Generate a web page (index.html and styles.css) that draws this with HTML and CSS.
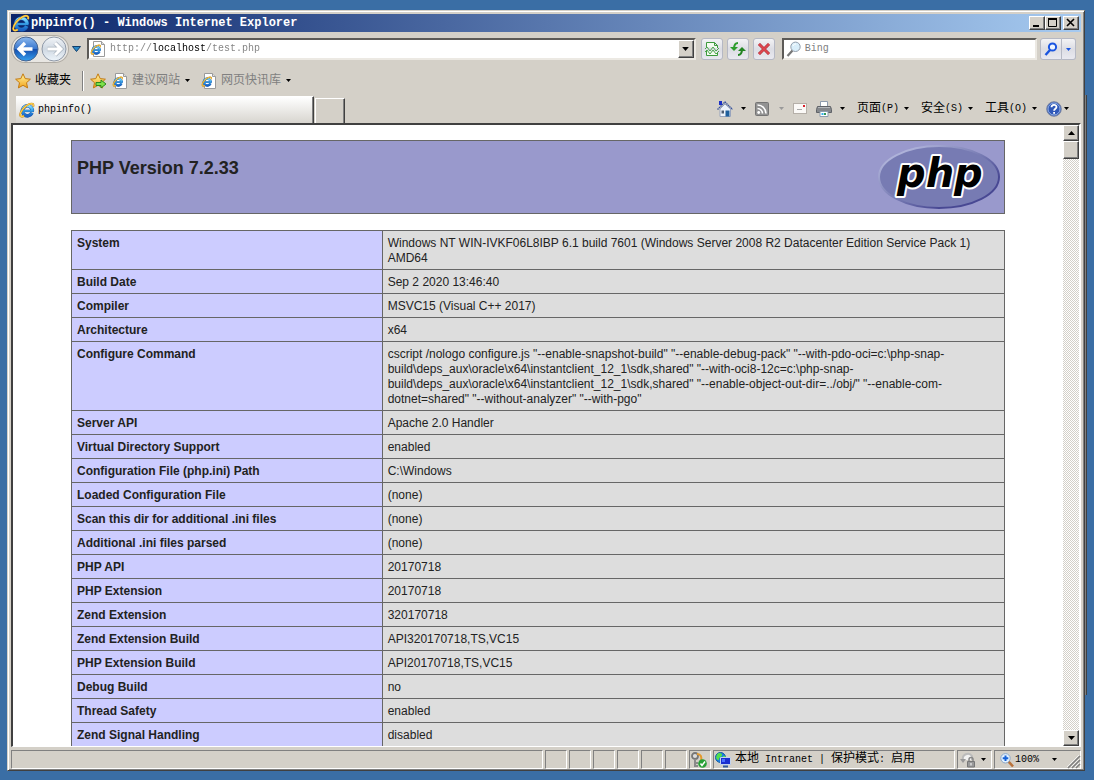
FILE: index.html
```html
<!DOCTYPE html>
<html lang="zh-CN">
<head>
<meta charset="utf-8">
<title>phpinfo()</title>
<link rel="stylesheet" href="styles.css">
</head>
<body>
<svg class="defs" aria-hidden="true">
  <defs>
    <linearGradient id="blue" x1="0" y1="0" x2="0" y2="1"><stop offset="0" stop-color="#86dcfc"/><stop offset=".5" stop-color="#2f9fe8"/><stop offset="1" stop-color="#1b62c4"/></linearGradient>
    <linearGradient id="gold" x1="0" y1="0" x2="0" y2="1"><stop offset="0" stop-color="#fff3a0"/><stop offset="1" stop-color="#f2a51c"/></linearGradient>
    <linearGradient id="backfill" x1="0" y1="0" x2="0" y2="1"><stop offset="0" stop-color="#8db9ee"/><stop offset=".48" stop-color="#3a78cf"/><stop offset=".52" stop-color="#164fae"/><stop offset="1" stop-color="#35a0f0"/></linearGradient>
    <linearGradient id="fwdfill" x1="0" y1="0" x2="0" y2="1"><stop offset="0" stop-color="#f2f5f8"/><stop offset=".5" stop-color="#cfd8e2"/><stop offset="1" stop-color="#eef5fb"/></linearGradient>
    <linearGradient id="rim" x1="0" y1="0" x2="1" y2="1"><stop offset=".15" stop-color="#aeb2d9"/><stop offset=".5" stop-color="#777bb3"/><stop offset=".75" stop-color="#484893"/></linearGradient>
    <symbol id="ie" viewBox="0 0 16 16">
      <path d="M13 10.800A5 5 0 1 1 13.400 8.800" fill="none" stroke="#1a5cae" stroke-width="3.600"/>
      <path d="M4.500 8.900h10.400" stroke="#1a5cae" stroke-width="2.400"/>
      <path d="M13 10.800A5 5 0 1 1 13.400 8.800" fill="none" stroke="url(#blue)" stroke-width="2.600"/>
      <path d="M4.500 8.900h9.900" stroke="#39a3ea" stroke-width="1.500"/>
      <path d="M14.200 4.600C15.200 2 13.300.6 9.700 2.300 5.300 4.400 1.300 9.600 1.100 12.900c-.1 2 1.800 2.200 4 1" fill="none" stroke="#b87812" stroke-width="1.800"/>
      <path d="M14.200 4.600C15.200 2 13.300.6 9.700 2.300 5.300 4.400 1.300 9.600 1.100 12.900c-.1 2 1.800 2.200 4 1" fill="none" stroke="#ffd24a" stroke-width="1.200"/>
    </symbol>
    <symbol id="iepage" viewBox="0 0 16 16">
      <path d="M3.500.5h8l3 3v12h-11z" fill="#fff" stroke="#9a9a9a"/><path d="M11.500.5v3h3" fill="#ddd" stroke="#9a9a9a"/>
      <use href="#ie" x="0" y="3" width="12" height="11"/>
    </symbol>
    <symbol id="star" viewBox="0 0 16 16">
      <path d="M8 .8l2.200 4.800 5.200.6-3.900 3.500 1.100 5.200L8 12.300l-4.600 2.600 1.100-5.200L.6 6.200l5.200-.6z" fill="url(#gold)" stroke="#c47a10"/>
    </symbol>
    <symbol id="down" viewBox="0 0 5 3"><path d="M0 0h5L2.500 3z" fill="currentColor"/></symbol>
  </defs>
</svg>

<div class="behind"></div>
<main class="window">
  <header class="titlebar">
    <svg class="icon18"><use href="#ie"/></svg>
    <h1 class="caption">phpinfo() - Windows Internet Explorer</h1>
    <div class="winbtns">
      <button class="bevel winbtn" aria-label="最小化"><svg width="12" height="10" viewBox="0 0 12 10"><path d="M2 8h6" stroke="#000" stroke-width="2"/></svg></button>
      <button class="bevel winbtn" aria-label="最大化"><svg width="12" height="10" viewBox="0 0 12 10"><path d="M1.500 1v7.500h8V1M1 1h9" fill="none" stroke="#000"/><path d="M1 1h9" stroke="#000" stroke-width="2"/></svg></button>
      <button class="bevel winbtn close" aria-label="关闭"><svg width="12" height="10" viewBox="0 0 12 10"><path d="M2 1l7 7M9 1L2 8" stroke="#000" stroke-width="1.600"/></svg></button>
    </div>
  </header>

  <nav class="navbar">
    <div class="travel">
      <button class="plain" aria-label="后退"><svg width="26" height="26" viewBox="0 0 26 26"><circle cx="13" cy="13" r="12" fill="url(#backfill)" stroke="#47648f"/><path d="M19.500 13H7M12 7l-6 6 6 6" fill="none" stroke="#fff" stroke-width="3.400"/></svg></button>
      <button class="plain" aria-label="前进"><svg width="26" height="26" viewBox="0 0 26 26"><circle cx="13" cy="13" r="12" fill="url(#fwdfill)" stroke="#8f99a8"/><path d="M6.500 13H19M14 7l6 6-6 6" fill="none" stroke="#a8b2bd" stroke-width="4.400"/><path d="M6.500 13H19M14 7l6 6-6 6" fill="none" stroke="#fff" stroke-width="3"/></svg></button>
    </div>
    <button class="plain history" aria-label="最近的页面"><svg width="9" height="6" viewBox="0 0 9 6"><path d="M.5.5h8l-4 5z" fill="#2b8ac8" stroke="#123f6c"/></svg></button>
    <div class="field address">
      <svg class="icon16"><use href="#iepage"/></svg>
      <input class="url" type="text" aria-label="地址" value="http://localhost/test.php">
      <button class="bevel drop" aria-label="显示地址列表"><svg width="7" height="4"><use href="#down"/></svg></button>
    </div>
    <button class="tool" aria-label="兼容性视图"><svg width="16" height="16" viewBox="0 0 16 16"><path d="M2.500 6V1.500h8l3 3V7M10.500 1.500v3h3M2.500 10v4.500h11V11" fill="#f3fbf0" stroke="#3d9a3d"/><path d="M1 8l2-2 3 4 3-4 3 4 3-3M1 11l2-2 3 4 3-4 3 4 3-3" fill="none" stroke="#4aa84a"/></svg></button>
    <button class="tool" aria-label="刷新"><svg width="16" height="16" viewBox="0 0 16 16"><path d="M8 2C5 2 4 4 4 8" fill="none" stroke="#2d9d2d" stroke-width="2"/><path d="M0 6h8L4 10z" fill="#2d9d2d"/><path d="M8 14c3 0 4-2 4-6" fill="none" stroke="#238523" stroke-width="2"/><path d="M8 10h8l-4-4z" fill="#238523"/></svg></button>
    <button class="tool" aria-label="停止"><svg width="16" height="16" viewBox="0 0 16 16"><path d="M3 3l10 10M13 3L3 13" stroke="#a82c34" stroke-width="3"/><path d="M3 3l10 10M13 3L3 13" stroke="#df4650" stroke-width="1.800"/></svg></button>
    <div class="field search">
      <svg width="16" height="16" viewBox="0 0 16 16"><path d="M6.500 9.500L1.500 15" stroke="#777" stroke-width="2.200"/><circle cx="9.500" cy="5.800" r="4.700" fill="#d9eefa" stroke="#929daa"/><path d="M7 5c.5-1.500 1.500-2 3-2" stroke="#fff" fill="none"/></svg>
      <input class="query" type="text" placeholder="Bing" aria-label="搜索">
    </div>
    <div class="go">
      <button class="tool goicon" aria-label="搜索"><svg width="14" height="14" viewBox="0 0 14 14"><circle cx="8.500" cy="5" r="3.600" fill="#eef5ff" stroke="#1a55e0" stroke-width="2"/><path d="M6 8l-4.500 5" stroke="#1a55e0" stroke-width="2.400"/></svg></button>
      <button class="tool godrop" aria-label="搜索选项"><svg width="5" height="3"><use href="#down"/></svg></button>
    </div>
  </nav>

  <nav class="favbar">
    <button class="plain link strong"><svg class="icon16"><use href="#star"/></svg>收藏夹</button>
    <span class="rule"></span>
    <button class="plain" aria-label="添加到收藏夹栏"><svg width="16" height="16" viewBox="0 0 16 16"><use href="#star"/><path d="M6 9.500h5V7l5 4-5 4v-2.500H6z" fill="#7ee04a" stroke="#2a8a1d"/></svg></button>
    <button class="plain link"><svg class="icon16"><use href="#iepage"/></svg>建议网站<svg class="caret"><use href="#down"/></svg></button>
    <button class="plain link"><svg class="icon16"><use href="#iepage"/></svg>网页快讯库<svg class="caret"><use href="#down"/></svg></button>
  </nav>

  <div class="tabrow">
    <button class="tab"><svg class="icon16"><use href="#ie"/></svg><span class="latin">phpinfo()</span></button>
    <button class="newtab" aria-label="新选项卡"></button>
    <div class="commands">
      <button class="plain cmd" aria-label="主页"><svg width="16" height="16" viewBox="0 0 16 16"><path d="M3 8v7.500h10.500V8L8 3z" fill="#eef3fb" stroke="#98a4bd"/><path d="M.5 8.500L8 1l7.500 7.500" fill="none" stroke="#38539c" stroke-width="1.400" stroke-dasharray="1.500 .6"/><path d="M2 0h3v4H2z" fill="#1a2fc8"/><path d="M8.500 9.500h4v6h-4z" fill="#1f5f9c"/><path d="M4.500 9.500h2.500v3H4.500z" fill="#4c5c72"/></svg><svg class="caret"><use href="#down"/></svg></button>
      <button class="plain cmd dim" aria-label="源"><svg width="14" height="14" viewBox="0 0 14 14"><rect x=".5" y=".5" width="13" height="13" rx="1" fill="#929292" stroke="#747474"/><circle cx="3.700" cy="10.500" r="1.400" fill="#fff"/><path d="M2.500 6.500a5 5 0 0 1 5 5M2.500 3a8.500 8.500 0 0 1 8.500 8.500" fill="none" stroke="#fff" stroke-width="1.600"/></svg><svg class="caret"><use href="#down"/></svg></button>
      <button class="plain cmd" aria-label="阅读邮件"><svg width="14" height="11" viewBox="0 0 14 11"><rect x=".5" y=".5" width="13" height="10" fill="#fbf9f7" stroke="#b5afa8"/><path d="M10 2h2v2h-2z" fill="#d8202a"/><path d="M4 6.500h5" stroke="#aaa"/></svg></button>
      <button class="plain cmd" aria-label="打印"><svg width="16" height="16" viewBox="0 0 16 16"><path d="M4.500.5h7V6h-7z" fill="#fff" stroke="#8e9cae"/><path d="M1.500 5.500h13l1 3v3H.5v-3z" fill="#85888c" stroke="#606368"/><path d="M2 6.500h12" stroke="#b4b7bb"/><path d="M4 10.500h8v5H4z" fill="#fff" stroke="#8e9cae"/><path d="M5.500 13h2" stroke="#35aeea" stroke-width="2"/><path d="M8 13h2" stroke="#2f9a58" stroke-width="2"/></svg><svg class="caret"><use href="#down"/></svg></button>
      <button class="plain cmd menu">页面<span class="latin">(P)</span><svg class="caret"><use href="#down"/></svg></button>
      <button class="plain cmd menu">安全<span class="latin">(S)</span><svg class="caret"><use href="#down"/></svg></button>
      <button class="plain cmd menu">工具<span class="latin">(O)</span><svg class="caret"><use href="#down"/></svg></button>
      <button class="plain cmd help" aria-label="帮助"><svg width="16" height="16" viewBox="0 0 16 16"><circle cx="8" cy="8" r="7.300" fill="#2f58b8" stroke="#7c86a0"/><circle cx="8" cy="8" r="6" fill="none" stroke="#a9c4ef" stroke-width=".8"/><path d="M5.500 6.300c0-3.300 5-3.200 5-.3 0 1.800-2.400 1.700-2.400 3.700M8.100 11v1.800" fill="none" stroke="#fff" stroke-width="1.800"/></svg><svg class="caret"><use href="#down"/></svg></button>
    </div>
  </div>

  <section class="client">
    <div class="page">
      <div class="banner">
        <h2 class="version">PHP Version 7.2.33</h2>
        <svg class="logo" width="122" height="66" viewBox="0 0 122 66" role="img" aria-label="PHP logo">
          <ellipse cx="61" cy="32" rx="60" ry="31" fill="#777bb3" stroke="url(#rim)" stroke-width="2"/>
          <text class="wordmark" x="19" y="42">php</text>
        </svg>
      </div>
      <table class="info">
        <tbody>
          <tr><th scope="row">System</th><td>Windows NT WIN-IVKF06L8IBP 6.1 build 7601 (Windows Server 2008 R2 Datacenter Edition Service Pack 1) AMD64</td></tr>
          <tr><th scope="row">Build Date</th><td>Sep 2 2020 13:46:40</td></tr>
          <tr><th scope="row">Compiler</th><td>MSVC15 (Visual C++ 2017)</td></tr>
          <tr><th scope="row">Architecture</th><td>x64</td></tr>
          <tr><th scope="row">Configure Command</th><td>cscript /nologo configure.js "--enable-snapshot-build" "--enable-debug-pack" "--with-pdo-oci=c:\php-snap-<br>build\deps_aux\oracle\x64\instantclient_12_1\sdk,shared" "--with-oci8-12c=c:\php-snap-<br>build\deps_aux\oracle\x64\instantclient_12_1\sdk,shared" "--enable-object-out-dir=../obj/" "--enable-com-<br>dotnet=shared" "--without-analyzer" "--with-pgo"</td></tr>
          <tr><th scope="row">Server API</th><td>Apache 2.0 Handler</td></tr>
          <tr><th scope="row">Virtual Directory Support</th><td>enabled</td></tr>
          <tr><th scope="row">Configuration File (php.ini) Path</th><td>C:\Windows</td></tr>
          <tr><th scope="row">Loaded Configuration File</th><td>(none)</td></tr>
          <tr><th scope="row">Scan this dir for additional .ini files</th><td>(none)</td></tr>
          <tr><th scope="row">Additional .ini files parsed</th><td>(none)</td></tr>
          <tr><th scope="row">PHP API</th><td>20170718</td></tr>
          <tr><th scope="row">PHP Extension</th><td>20170718</td></tr>
          <tr><th scope="row">Zend Extension</th><td>320170718</td></tr>
          <tr><th scope="row">Zend Extension Build</th><td>API320170718,TS,VC15</td></tr>
          <tr><th scope="row">PHP Extension Build</th><td>API20170718,TS,VC15</td></tr>
          <tr><th scope="row">Debug Build</th><td>no</td></tr>
          <tr><th scope="row">Thread Safety</th><td>enabled</td></tr>
          <tr><th scope="row">Zend Signal Handling</th><td>disabled</td></tr>
        </tbody>
      </table>
    </div>
    <div class="scrollbar">
      <button class="bevel arrow" aria-label="向上滚动"><svg width="7" height="4" viewBox="0 0 7 4"><path d="M0 4h7L3.500 0z"/></svg></button>
      <div class="bevel thumb"></div>
      <button class="bevel arrow last" aria-label="向下滚动"><svg width="7" height="4" viewBox="0 0 7 4"><path d="M0 0h7L3.500 4z"/></svg></button>
    </div>
  </section>

  <footer class="status">
    <div class="pane wide"></div>
    <div class="pane cell"></div><div class="pane cell"></div><div class="pane cell"></div><div class="pane cell"></div><div class="pane cell"></div><div class="pane cell"></div>
    <div class="pane cell"><svg width="17" height="16" viewBox="0 0 17 16"><circle cx="5" cy="4" r="3" fill="#ddd" stroke="#777" stroke-width="1.800"/><path d="M5 7v8M5 11h3M5 14h3" stroke="#8a8a8a" stroke-width="2"/><path d="M7 2c4 0 5 3 4 7" fill="none" stroke="#e49a2b" stroke-width="2"/><circle cx="12.500" cy="11.500" r="4.300" fill="#26a035"/><path d="M10.500 11.500l1.500 2 3-4" fill="none" stroke="#fff" stroke-width="1.500"/></svg></div>
    <div class="pane zone">
      <svg width="16" height="16" viewBox="0 0 16 16"><circle cx="5.500" cy="5.500" r="5" fill="#1d7fe0" stroke="#1560a8"/><path d="M2 2.500C4 0 7 1 7 3S4 5 4 7 2 8 1 6zM8 4l2.500 0-.5 4-2-1z" fill="#54e04c"/><path d="M5.500 5.500h10v7h-10z" fill="#1a2fd0" stroke="#c3d4ee"/><path d="M7 7h3v3H7z" fill="#4a70ff"/><path d="M8 14.500h5" stroke="#315a9e" stroke-width="2"/></svg>
      <span>本地<span class="latin"> Intranet | </span>保护模式<span class="latin">: </span>启用</span>
    </div>
    <button class="pane lock" aria-label="安全报告"><svg width="16" height="16" viewBox="0 0 16 16"><path d="M3 8a5 5 0 0 1 9-4v4" fill="#f2f2f2" stroke="#bbb" stroke-width="2"/><path d="M0 7h6l-3 4z" fill="#999"/><path d="M7.500 9.500h7v5.500h-7z" fill="#999" stroke="#777"/><path d="M9 9V7.500a2 2 0 0 1 4 0V9" fill="none" stroke="#888" stroke-width="1.500"/><path d="M11 11v2.500" stroke="#fff"/></svg><svg class="caret"><use href="#down"/></svg></button>
    <button class="pane zoom"><svg width="14" height="14" viewBox="0 0 14 14"><path d="M8 8l5 5.500" stroke="#b8713a" stroke-width="2.600"/><circle cx="5.500" cy="5.300" r="4.700" fill="#e2f1ff" stroke="#8ca8c8"/><path d="M5.500 2.500v5.600M2.700 5.300h5.600" stroke="#1763d8" stroke-width="2"/></svg><span class="latin">100%</span><svg class="caret"><use href="#down"/></svg>
      <svg class="grip" width="12" height="12" viewBox="0 0 12 12"><path d="M0 12L12 0M4 12l8-8M8 12l4-4" stroke="#808080" stroke-width="1.500"/><path d="M-1 11L11-1M3 11l8-8M7 11l4-4" stroke="#fff" stroke-width=".7"/></svg></button>
  </footer>
</main>
</body>
</html>
```
FILE: styles.css
```css
* { box-sizing: border-box; }

body {
  margin: 0;
  height: 100vh;
  padding: 10px 9px 9px 7px;
  display: flex;
  overflow: hidden;
  background: #3a6ea5;
  color: #000;
  font: 12px/16px "Liberation Mono", "Noto Sans CJK SC", monospace;
}

button, input { margin: 0; padding: 0; border: 0; font: inherit; color: inherit; }
svg { display: block; flex: none; overflow: visible; }

.defs { position: absolute; width: 0; height: 0; }
.behind {
  position: absolute;
  top: 95px;
  right: 7px;
  bottom: 85px;
  width: 2px;
  border-right: 1px solid #404040;
  background: #808080;
}

.window {
  flex: 1;
  min-width: 0;
  display: flex;
  flex-direction: column;
  padding: 2px 2px 1px;
  background: #d4d0c8;
  border: 1px solid;
  border-color: #d4d0c8 #404040 #404040 #d4d0c8;
  box-shadow: inset 1px 1px #fff, inset -1px -1px #808080;
}
.window > * { margin: 0 1px; }

.bevel {
  background: #d4d0c8;
  border: 1px solid;
  border-color: #fff #404040 #404040 #fff;
  box-shadow: inset -1px -1px #808080;
  display: flex;
  align-items: center;
  justify-content: center;
}
.plain { background: none; display: flex; align-items: center; }
.icon16 { width: 16px; height: 16px; }
.icon18 { width: 18px; height: 18px; }
.caret { width: 5px; height: 3px; color: #000; }
.latin { font-size: 10px; white-space: pre; }

.window > .titlebar {
  flex: none;
  height: 18px;
  margin-top: 1px;
  padding: 0 2px 0 1px;
  display: flex;
  align-items: center;
  gap: 1px;
  background: linear-gradient(90deg, #0a246a, #a6caf0);
}
.caption { margin: 0; flex: 1; color: #fff; font-size: 12px; font-weight: bold; white-space: nowrap; }
.winbtns { display: flex; }
.winbtn { width: 16px; height: 14px; }
.close { margin-left: 2px; }

.navbar { flex: none; height: 34px; display: flex; align-items: center; padding: 0 5px 0 1px; }
.travel {
  display: flex;
  gap: 2px;
  padding: 0 1px;
  border-radius: 14px;
  background: #e8e6e2;
  box-shadow: 0 0 0 1px #b0aca5;
}
.history { margin: 0 6px 0 4px; }
.field {
  height: 22px;
  display: flex;
  align-items: center;
  background: #fff;
  border: 2px solid;
  border-color: #5c5a57 #ece9e3 #ece9e3 #5c5a57;
}
.address { flex: 1; padding-left: 1px; margin-right: 5px; }
.url {
  flex: 1;
  min-width: 0;
  margin-left: 4px;
  font-size: 10px;
  outline: 0;
  color: transparent;
  background: linear-gradient(90deg, #808080 42px, #000 42px, #000 96px, #808080 96px);
  background-clip: text;
  -webkit-background-clip: text;
}
.drop { width: 16px; height: 18px; }
.tool {
  width: 22px;
  height: 22px;
  margin-right: 4px;
  display: flex;
  align-items: center;
  justify-content: center;
  border: 1px solid #b5b8c4;
  border-radius: 3px;
  background: linear-gradient(#f3f3f5, #dcdde4 50%, #e9e9f0);
}
.search { width: 24%; padding-left: 2px; margin: 0 3px; }
.query { flex: 1; min-width: 0; margin-left: 3px; font-size: 10px; background: none; outline: 0; }
.query::placeholder { color: #808080; }
.go { display: flex; }
.goicon { margin: 0; border-radius: 3px 0 0 3px; }
.godrop { width: 14px; margin: 0; border-left: 0; border-radius: 0 3px 3px 0; color: #1a55e0; }

.favbar { flex: none; height: 29px; display: flex; align-items: center; gap: 6px; padding-left: 4px; }
.link { gap: 4px; color: #808080; white-space: nowrap; }
.link .caret { margin-left: 1px; }
.link + .link { margin-left: 5px; }
.strong { color: #000; }
.rule { width: 2px; height: 20px; margin-left: 5px; border-left: 1px solid #808080; background: #fff; }

.tabrow { flex: none; height: 28px; display: flex; align-items: flex-end; padding: 0 12px 0 5px; }
.tab {
  width: 298px;
  height: 27px;
  padding: 0 3px;
  display: flex;
  align-items: center;
  gap: 3px;
  background: linear-gradient(#fff, #d8d5cf);
  border-top: 1px solid #fff;
  border-right: 1px solid #404040;
  box-shadow: inset -1px 0 #808080;
}
.newtab {
  width: 30px;
  height: 25px;
  margin-left: 1px;
  background: #d4d0c8;
  border: solid;
  border-width: 1px 1px 0;
  border-color: #fff #404040 #404040 #fff;
  box-shadow: inset -1px 0 #808080;
}
.commands { margin-left: auto; height: 28px; padding-bottom: 1px; align-self: flex-start; display: flex; align-items: center; gap: 9px; }
.cmd { gap: 8px; white-space: nowrap; }
.dim { gap: 10px; }
.dim .caret { color: #999; }
.menu { gap: 0; margin-left: 3px; }
.menu .caret { margin-left: 5px; }
.help { gap: 2px; }

.client {
  flex: 1;
  min-height: 0;
  display: flex;
  border: solid;
  border-width: 2px 2px 1px;
  border-color: #404040 #fff #fff #404040;
  background: #fff;
}
.page {
  flex: 1;
  min-width: 0;
  overflow: hidden;
  padding: 15px 58px 0;
  color: #222;
  font-family: "Liberation Sans", Arial, sans-serif;
}
.banner {
  display: flex;
  justify-content: space-between;
  height: 74px;
  padding: 4px 4px 4px 5px;
  border: 1px solid #666;
  background: #99c;
}
.version { margin: 13px 0 0; font-size: 18px; line-height: 20px; }
.wordmark {
  font: italic bold 40px "DejaVu Sans", sans-serif;
  fill: #000;
  stroke: #fff;
  stroke-width: 4px;
  stroke-linejoin: round;
  paint-order: stroke;
}
.info { width: 100%; margin-top: 16px; border-collapse: collapse; table-layout: fixed; line-height: 15px; }
.info th, .info td { padding: 5px 5px 3px; border: 1px solid #666; vertical-align: top; text-align: left; }
.info th { width: 33.300%; background: #ccf; }
.info td { background: #ddd; }

.scrollbar {
  width: 16px;
  display: flex;
  flex-direction: column;
  background: repeating-conic-gradient(#fff 0 25%, #d4d0c8 0 50%) 0 0 / 2px 2px;
}
.arrow { height: 16px; flex: none; }
.thumb { height: 18px; flex: none; }
.last { margin-top: auto; }

.status { flex: none; height: 22px; padding-top: 3px; display: flex; gap: 2px; }
.pane {
  height: 19px;
  display: flex;
  align-items: center;
  background: #d4d0c8;
  border: 1px solid;
  border-color: #808080 #fff #fff #808080;
}
.wide { flex: 1; }
.cell { width: 22px; }
.zone { width: 242px; padding-left: 1px; gap: 4px; white-space: pre; }
.lock { width: 35px; padding-left: 2px; gap: 5px; }
.zoom { width: 87px; padding-left: 5px; gap: 1px; }
.zoom .caret { margin-left: 12px; }
.grip { margin: 4px 0 0 auto; }
```
